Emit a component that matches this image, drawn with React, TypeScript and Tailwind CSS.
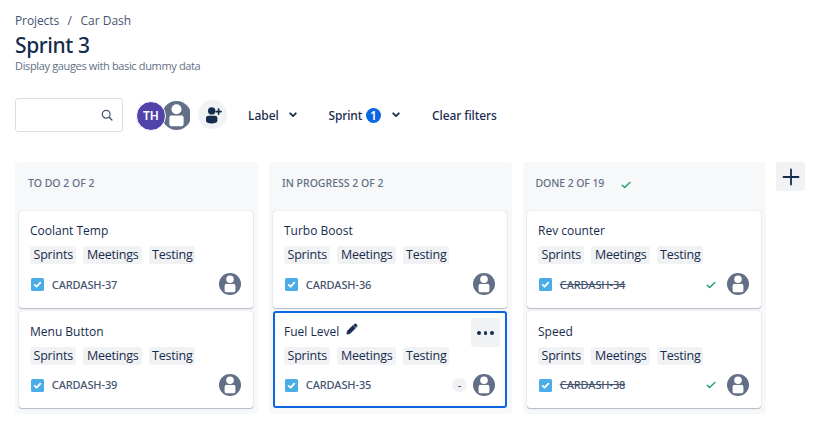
import type { ReactNode } from 'react';

type Issue = { title: string; id: string; done?: boolean; active?: boolean };
type ColumnData = { name: string; done?: boolean; issues: Issue[] };

const columns: ColumnData[] = [
  { name: 'TO DO 2 OF 2', issues: [{ title: 'Coolant Temp', id: 'CARDASH-37' }, { title: 'Menu Button', id: 'CARDASH-39' }] },
  { name: 'IN PROGRESS 2 OF 2', issues: [{ title: 'Turbo Boost', id: 'CARDASH-36' }, { title: 'Fuel Level', id: 'CARDASH-35', active: true }] },
  { name: 'DONE 2 OF 19', done: true, issues: [{ title: 'Rev counter', id: 'CARDASH-34', done: true }, { title: 'Speed', id: 'CARDASH-38', done: true }] },
];

function Avatar({ className }: { className: string }) {
  return (
    <svg viewBox="0 0 22 22" className={className}>
      <circle cx="11" cy="11" r="11" fill="#626f86" />
      <circle cx="11" cy="6.3" r="3.8" fill="#fff" />
      <path d="M5.6 12.8a2 2 0 0 1 2-2h6.8a2 2 0 0 1 2 2v4.6c0 1-.8 1.8-2.2 1.8H7.8c-1.4 0-2.2-.8-2.2-1.8z" fill="#fff" />
      <path d="M7.6 10.5h6.8" stroke="#626f86" strokeWidth=".8" />
    </svg>
  );
}

function Tick({ className }: { className: string }) {
  return (
    <svg viewBox="0 0 10 8" className={className}>
      <path d="M1.2 4.3 3.6 6.6 8.8 1.5" fill="none" stroke="#22a06b" strokeWidth="1.4" strokeLinecap="round" strokeLinejoin="round" />
    </svg>
  );
}

function Chevron() {
  return (
    <svg viewBox="0 0 8 6" className="h-1.5 w-2">
      <path d="M1.2 1.3 4 4.1 6.8 1.3" fill="none" stroke="#172b4d" strokeWidth="1.8" strokeLinecap="round" strokeLinejoin="round" />
    </svg>
  );
}

function Tag({ className, children }: { className: string; children: ReactNode }) {
  return (
    <span className={`flex h-[18px] items-center justify-center rounded-[3px] bg-[#f1f2f4] pl-[0.5px] text-[12.5px] leading-[18px] tracking-[-0.2px] text-[#172b4d] ${className}`}>
      {children}
    </span>
  );
}

function Card({ issue }: { issue: Issue }) {
  const frame = issue.active
    ? 'shadow-[inset_0_0_0_2px_#0c66e4]'
    : 'shadow-[0_1px_1px_rgba(9,30,66,0.25),0_0_1px_rgba(9,30,66,0.31)]';
  return (
    <article className={`relative h-[97px] rounded-[3px] bg-white pl-[11px] pr-3 pt-[12.4px] ${frame}`}>
      <h3 className="flex h-4 items-center text-[12px] leading-4 text-[#172b4d]">
        {issue.title}
        {issue.active && (
          <svg viewBox="0 0 12 12" className="mb-[5px] ml-[7px] size-3">
            <path d="M.9 11.1 1.5 8 6.9 2.6 9.4 5.1 4 10.5z" fill="#172b4d" stroke="#172b4d" strokeWidth=".8" strokeLinejoin="round" />
            <path d="M7.5 2 8.4 1.2a1.2 1.2 0 0 1 1.7 0l.7.7a1.2 1.2 0 0 1 0 1.7L10 4.5z" fill="#172b4d" stroke="#172b4d" strokeWidth=".6" />
          </svg>
        )}
      </h3>
      {issue.active && (
        <button className="absolute right-[7px] top-[7px] flex size-[29px] items-center justify-center gap-[2.5px] rounded-[3px] bg-[#f1f2f4]">
          <i className="size-[3.8px] rounded-full bg-[#172b4d]" />
          <i className="size-[3.8px] rounded-full bg-[#172b4d]" />
          <i className="size-[3.8px] rounded-full bg-[#172b4d]" />
        </button>
      )}
      <div className="mt-[7px] flex gap-[7px]">
        <Tag className="w-[46px]">Sprints</Tag>
        <Tag className="w-[59px]">Meetings</Tag>
        <Tag className="w-[46px]">Testing</Tag>
      </div>
      <div className="mt-[8.7px] flex h-[23px] items-center">
        <svg viewBox="0 0 13 13" className="ml-[0.75px] mt-px size-[13px]">
          <rect width="13" height="13" rx="1.5" fill="#4bade8" />
          <path d="M3.7 6.9 5.6 8.7 9.3 4.6" fill="none" stroke="#fff" strokeWidth="1.8" strokeLinecap="round" strokeLinejoin="round" />
        </svg>
        <span className={`ml-2 mt-px font-['Noto_Sans','Open_Sans',sans-serif] text-[11px] font-medium tracking-[-0.1px] text-[#44546f] ${issue.done ? 'line-through' : ''}`}>
          {issue.id}
        </span>
        <span className="flex-1" />
        {issue.done && <Tick className="mr-[11px] mt-px h-2 w-2.5" />}
        {issue.active && (
          <span className="mr-1.5 flex h-3.5 w-[15px] items-center justify-center rounded-full bg-[#f1f2f4] text-[11px] leading-3 text-[#172b4d]">-</span>
        )}
        <Avatar className="size-[22px]" />
      </div>
    </article>
  );
}

export default function App() {
  return (
    <main className="h-[424px] w-[819px] overflow-hidden bg-white pl-[15px] pt-3 font-['Open_Sans','Noto_Sans',sans-serif] text-[#172b4d]">
      <nav className="flex h-[17px] items-center text-[12px] leading-[17px] text-[#44546f]">
        <span className="tracking-[-0.1px]">Projects</span>
        <span className="ml-[8.5px] mr-[8.5px]">/</span>
        <span>Car Dash</span>
      </nav>
      <h1 className="mt-[3px] h-[26px] font-['Noto_Sans','Open_Sans',sans-serif] text-[21px] font-medium leading-[27px] tracking-[-0.4px]">Sprint 3</h1>
      <p className="h-[15px] text-[11px] leading-[15px] tracking-[-0.35px] text-[#626f86]">Display gauges with basic dummy data</p>

      <div className="mt-[25px] flex h-[34px] items-center font-['Noto_Sans','Open_Sans',sans-serif] text-[12px] font-medium">
        <div className="flex h-[34px] w-[108px] items-center justify-end rounded-[3px] border border-[#dcdfe4] pr-[9px]">
          <svg viewBox="0 0 12 12" className="size-3">
            <circle cx="5.2" cy="5.2" r="3.9" fill="none" stroke="#44546f" strokeWidth="1.2" />
            <path d="M8.2 8.2 10.9 10.9" stroke="#44546f" strokeWidth="1.4" strokeLinecap="round" />
          </svg>
        </div>
        <div className="ml-[13px] mt-px flex items-center">
          <span className="z-10 flex size-[30px] items-center justify-center rounded-full border border-white bg-[#5243aa] text-[12px] font-semibold leading-none text-white">TH</span>
          <span className="-ml-1 w-7 overflow-hidden"><Avatar className="size-[29px] max-w-none" /></span>
        </div>
        <span className="mb-px ml-[8px] flex size-[29px] items-center justify-center rounded-full bg-[#f1f2f4]">
          <svg viewBox="0 0 18 18" className="size-[18px] text-[#172b4d]" fill="currentColor">
            <circle cx="7.7" cy="4.9" r="3.7" />
            <path d="M2 12a2.3 2.3 0 0 1 2.3-2.3h6.8a2.3 2.3 0 0 1 2.3 2.3v3c0 1.5-2.5 2.4-5.7 2.4S2 16.5 2 15z" />
            <path d="M14.6 3.1v5M12.1 5.6h5" stroke="currentColor" strokeWidth="1.7" strokeLinecap="round" />
          </svg>
        </span>
        <span className="ml-[21px] mt-0.5 w-[31px]">Label</span>
        <span className="ml-2.5"><Chevron /></span>
        <span className="ml-[31.4px] mt-0.5 w-[35px] tracking-[-0.1px]">Sprint</span>
        <span className="ml-[2.6px] mt-px flex size-[15px] items-center justify-center rounded-full bg-[#0c66e4] text-[12px] font-semibold leading-none text-white">1</span>
        <span className="ml-[11px]"><Chevron /></span>
        <span className="ml-8 mt-0.5 whitespace-nowrap tracking-[-0.1px]">Clear filters</span>
      </div>

      <div className="mt-[30px] flex items-start gap-[11px]">
        {columns.map((column) => (
          <section key={column.name} className="h-[252px] w-[243px] rounded bg-[#f7f8f9] pl-1 pr-[5px]">
            <h2 className="flex h-[48.7px] items-center pb-[5px] pl-[9px] font-['Noto_Sans','Open_Sans',sans-serif] text-[10.5px] font-medium text-[#626f86]">
              <span className={column.done ? '-ml-[0.5px] tracking-[-0.1px]' : ''}>{column.name}</span>
              {column.done && <Tick className="ml-[16.5px] mt-0.5 h-2 w-2.5" />}
            </h2>
            <div className="flex flex-col gap-[3.5px]">
              {column.issues.map((issue) => <Card key={issue.id} issue={issue} />)}
            </div>
          </section>
        ))}
        <button className="-ml-px flex size-[29px] items-center justify-center rounded-[3px] bg-[#f1f2f4]">
          <svg viewBox="0 0 18 18" className="size-[18px]">
            <path d="M9 1.5v15M1.5 9h15" stroke="#172b4d" strokeWidth="1.8" strokeLinecap="round" />
          </svg>
        </button>
      </div>
    </main>
  );
}
